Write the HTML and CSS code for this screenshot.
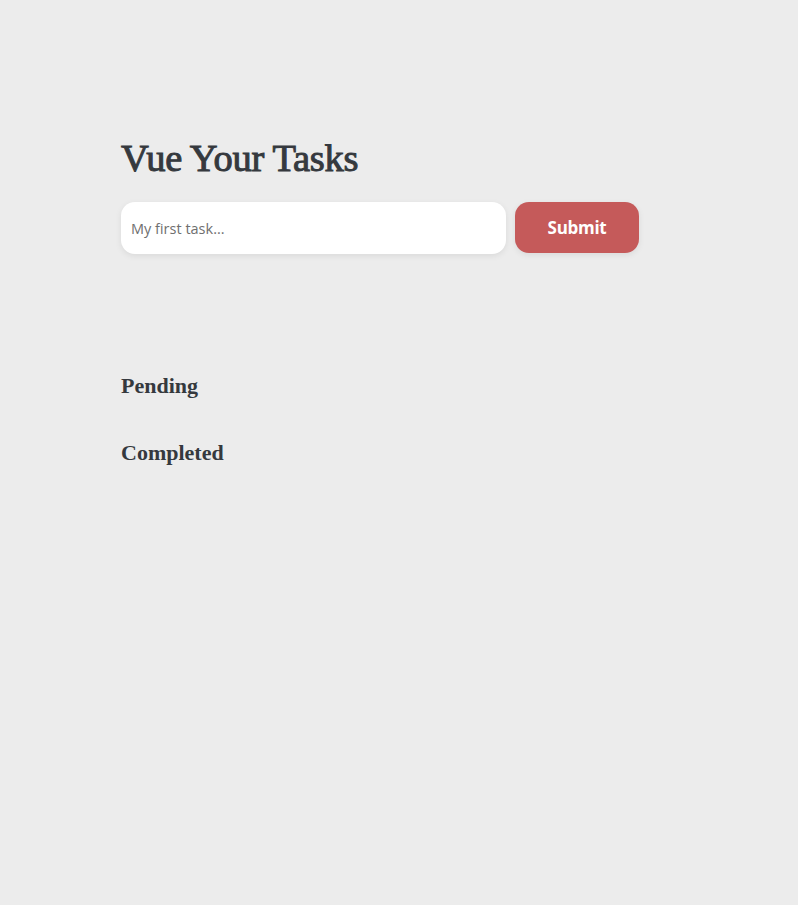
FILE: index.html
```html
<!DOCTYPE html>
<html>
<head>
<meta charset="utf-8">
<link rel="stylesheet" href="styles.css">
</head>
<body>
<main class="app">
  <h1 class="title">Vue Your Tasks</h1>
  <form class="task-form">
    <input class="task-input" type="text" placeholder="My first task...">
    <button class="submit-btn" type="button">Submit</button>
  </form>
  <section class="list">
    <h2 class="list-title">Pending</h2>
  </section>
  <section class="list">
    <h2 class="list-title">Completed</h2>
  </section>
</main>
</body>
</html>
```
FILE: styles.css
```css
html, body {
  margin: 0;
  padding: 0;
  background: #ececec;
  color: #35393e;
}
body {
  min-height: 905px;
}
.app {
  padding: 136px 0 0 121px;
  width: 518px;
}
.title {
  font-family: "Liberation Serif", "DejaVu Serif", serif;
  font-weight: normal;
  font-size: 38.5px;
  -webkit-text-stroke: 1px #35393e;
  letter-spacing: -0.3px;
  line-height: 44px;
  margin: 0 0 22px;
}
.task-form {
  display: flex;
  gap: 9px;
  margin: 0 0 118px;
}
.task-input {
  flex: 0 0 385px;
  height: 52px;
  box-sizing: border-box;
  border: none;
  border-radius: 14px;
  background: #fff;
  padding: 0 10px;
  font-family: "Open Sans", "Liberation Sans", sans-serif;
  font-size: 14.5px;
  color: #333;
  box-shadow: 0 2px 6px rgba(0,0,0,0.08);
  outline: none;
}
.task-input::placeholder {
  color: #6f6f6f;
}
.submit-btn {
  flex: 0 0 124px;
  height: 51px;
  border: none;
  border-radius: 14px;
  background: #c55a5a;
  color: #fff;
  font-family: "Open Sans", "Liberation Sans", sans-serif;
  font-weight: 700;
  font-size: 17px;
  letter-spacing: -0.3px;
  box-shadow: 0 2px 6px rgba(0,0,0,0.08);
}
.list {
  margin: 0 0 39px;
}
.list-title {
  font-family: "Liberation Serif", "DejaVu Serif", serif;
  font-weight: bold;
  font-size: 22px;
  line-height: 28px;
  margin: 0;
}
```
